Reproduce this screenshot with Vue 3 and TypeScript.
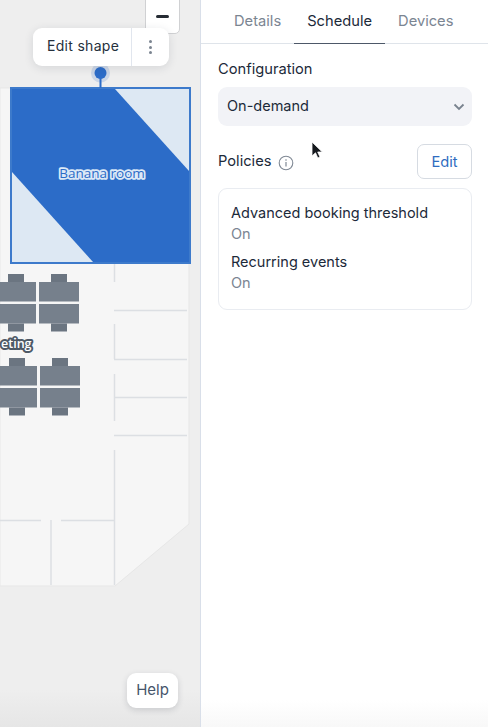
<script setup lang="ts">
const tabs = [
  { label: 'Details', active: false },
  { label: 'Schedule', active: true },
  { label: 'Devices', active: false },
]
const policies = [
  { name: 'Advanced booking threshold', value: 'On' },
  { name: 'Recurring events', value: 'On' },
]
const walls = [
  'M114.5 262V282', 'M114 310.5H187', 'M114.5 324V359', 'M114 359.5H187',
  'M114.5 374V421', 'M114 397.5H187', 'M114 435.5H187', 'M114.500 450V585',
  'M0 520.5H41', 'M61 520.5H114', 'M51 520V585',
]
const desks = [
  { x: -4, y: 274 }, { x: 39, y: 274 }, { x: -3, y: 358 }, { x: 40, y: 358 },
]
</script>

<template>
  <div class="screen">
    <div class="map">
      <svg class="plan" width="200" height="727" viewBox="0 0 200 727">
        <polygon points="0,88 189,88 189,524 115,586 0,586" fill="#f6f6f6" stroke="#e7e7e7" />
        <path v-for="d in walls" :key="d" :d="d" stroke="#dcdfe3" stroke-width="1.500" fill="none" />
        <g v-for="(g, i) in desks" :key="i" :transform="`translate(${g.x} ${g.y})`">
          <rect x="12" y="0" width="16" height="8" fill="#6b7581" />
          <rect x="0" y="8" width="40" height="19.500" fill="#76808c" />
          <rect x="0" y="30" width="40" height="19.500" fill="#76808c" />
          <rect x="12" y="49.500" width="16" height="8" fill="#6b7581" />
        </g>
        <text class="seat-label" x="1" y="348">eting</text>
        <rect x="11" y="88" width="179" height="175" fill="#dde8f3" stroke="#3d7acb" stroke-width="2" />
        <polygon points="12,89 115,89 189,171 189,262 93,262 12,172" fill="#2c6cc8" />
        <path d="M100.500 74V88" stroke="#2c6cc8" stroke-width="2" />
        <circle cx="100.500" cy="73" r="9.500" fill="#2c6cc8" fill-opacity=".18" />
        <circle cx="100.500" cy="73" r="6" fill="#2c6cc8" />
        <text class="room-label" x="102" y="178" text-anchor="middle">Banana room</text>
      </svg>

      <div class="zoom-button"><span class="minus"></span></div>

      <div class="shape-menu">
        <span class="shape-label">Edit shape</span>
        <span class="shape-more">
          <i></i><i></i><i></i>
        </span>
      </div>

      <div class="help">Help</div>
    </div>

    <aside class="panel">
      <nav class="tabs">
        <span v-for="t in tabs" :key="t.label" class="tab" :class="{ active: t.active }">{{ t.label }}</span>
      </nav>

      <div class="body">
        <h2 class="heading">Configuration</h2>
        <div class="select">
          <span class="select-value">On-demand</span>
          <svg width="12" height="8" viewBox="0 0 12 8"><path d="M1.500 1.500 6 6l4.500-4.500" fill="none" stroke="#79828e" stroke-width="1.800" /></svg>
        </div>

        <div class="policies-head">
          <div class="policies-title">
            <h2 class="heading policies-heading">Policies</h2>
            <svg class="info" width="16" height="16" viewBox="0 0 16 16">
              <circle cx="8" cy="8" r="6.800" fill="none" stroke="#7f8894" stroke-width="1.100" />
              <circle cx="8" cy="5" r=".8" fill="#7f8894" />
              <path d="M8 7v4.500" stroke="#7f8894" stroke-width="1.200" />
            </svg>
          </div>
          <button class="edit">Edit</button>
        </div>

        <div class="card">
          <div v-for="p in policies" :key="p.name" class="policy">
            <div class="policy-name">{{ p.name }}</div>
            <div class="policy-value">{{ p.value }}</div>
          </div>
        </div>
      </div>

      <svg class="cursor" width="14" height="20" viewBox="0 0 14 20">
        <path d="M1 1v14l3.500-3.200 2.300 5.200 2.200-1-2.300-5h4.600z" fill="#15181d" stroke="#fff" stroke-width=".8" />
      </svg>
    </aside>
  </div>
</template>

<style scoped>
.screen {
  display: flex;
  width: 488px;
  height: 727px;
  overflow: hidden;
  background: linear-gradient(#fff 700px, #f8f8f8 727px);
  font-family: Inter, "Open Sans", sans-serif;
  color: #1c2a3a;
}
.map {
  position: relative;
  flex: 0 0 200px;
  height: 727px;
  overflow: hidden;
  background: linear-gradient(#eeeeee 690px, #e6e6e6 727px);
}
.plan {
  position: absolute;
  inset: 0;
}
.seat-label {
  font: 600 12.500px "Open Sans", sans-serif;
  fill: #fff;
  stroke: #4e5966;
  stroke-width: 4px;
  paint-order: stroke;
  stroke-linejoin: round;
}
.room-label {
  font: 500 13.500px "Open Sans", sans-serif;
  fill: #2c6cc8;
  stroke: #dce9f7;
  stroke-width: 3.500px;
  paint-order: stroke;
  stroke-linejoin: round;
}
.zoom-button {
  position: absolute;
  left: 145px;
  top: -2px;
  width: 35px;
  height: 36px;
  display: flex;
  align-items: center;
  justify-content: center;
  background: #fff;
  border: 1.500px solid #d0d1d3;
  border-radius: 0 0 5px 5px;
  box-sizing: border-box;
}
.minus {
  width: 13px;
  height: 3px;
  border-radius: 2px;
  background: #262c34;
}
.shape-menu {
  position: absolute;
  left: 33px;
  top: 28px;
  width: 136px;
  height: 38px;
  display: flex;
  background: #fff;
  border-radius: 9px;
  box-shadow: 0 2px 10px rgba(30, 40, 55, .12);
}
.shape-label {
  flex: 0 0 99px;
  padding-left: 14px;
  box-sizing: border-box;
  font-size: 14px;
  line-height: 36px;
  letter-spacing: .3px;
  color: #25303d;
  border-right: 1px solid #e1e6ee;
}
.shape-more {
  flex: 1;
  display: flex;
  flex-direction: column;
  align-items: center;
  justify-content: center;
  gap: 2.500px;
}
.shape-more i {
  width: 3px;
  height: 3px;
  border-radius: 50%;
  background: #7b8490;
}
.help {
  position: absolute;
  left: 127px;
  top: 673px;
  width: 51px;
  height: 35px;
  text-align: center;
  font-size: 15px;
  line-height: 34px;
  color: #46556a;
  background: #fff;
  border-radius: 9px;
  box-shadow: 0 2px 6px rgba(30, 40, 55, .16);
}
.panel {
  position: relative;
  flex: 1;
  min-width: 0;
  border-left: 1px solid #d9dfe9;
}
.tabs {
  display: flex;
  height: 44px;
  box-sizing: border-box;
  padding-left: 20px;
  border-bottom: 1px solid #dfe4ea;
}
.tab {
  padding: 0 13px;
  font-size: 14.700px;
  font-weight: 400;
  line-height: 42px;
  color: #7b8592;
  height: 44px;
  box-sizing: border-box;
}
.tab.active {
  color: #1c2a3a;
  border-bottom: 1px solid #4d5868;
}
.body {
  padding: 15px 16px 0 17px;
}
.heading {
  margin: 0;
  font-size: 14.700px;
  font-weight: 400;
  line-height: 20px;
  color: #1c2a3a;
}
.policies-heading {
  margin-bottom: 2px;
}
.select {
  display: flex;
  align-items: center;
  justify-content: space-between;
  height: 39px;
  margin-top: 8px;
  padding: 0 7px 0 9px;
  border-radius: 9px;
  background: #f2f3f7;
  font-size: 14.500px;
  color: #1c2a3a;
}
.select-value {
  margin-bottom: 2px;
}
.policies-head {
  display: flex;
  align-items: center;
  justify-content: space-between;
  margin-top: 18px;
}
.policies-title {
  display: flex;
  align-items: center;
  gap: 6px;
}
.info {
  margin-top: 2px;
}
.edit {
  width: 55px;
  height: 35px;
  padding: 0;
  background: #fff;
  border: 1px solid #d6dbe2;
  border-radius: 7px;
  font: 400 14.700px Inter, sans-serif;
  color: #2f6cc0;
}
.card {
  margin-top: 9px;
  padding: 14px 12px 16px;
  border: 1px solid #e9ecf1;
  border-radius: 9px;
}
.policy + .policy {
  margin-top: 8px;
}
.policy-name {
  font-size: 14.500px;
  font-weight: 400;
  line-height: 20px;
  color: #1c2a3a;
}
.policy-value {
  margin-top: 1px;
  font-size: 14.500px;
  line-height: 20px;
  color: #7b8592;
}
.cursor {
  position: absolute;
  left: 110px;
  top: 141px;
}
</style>

<style>
html, body {
  margin: 0;
  background: #fff;
}
</style>
